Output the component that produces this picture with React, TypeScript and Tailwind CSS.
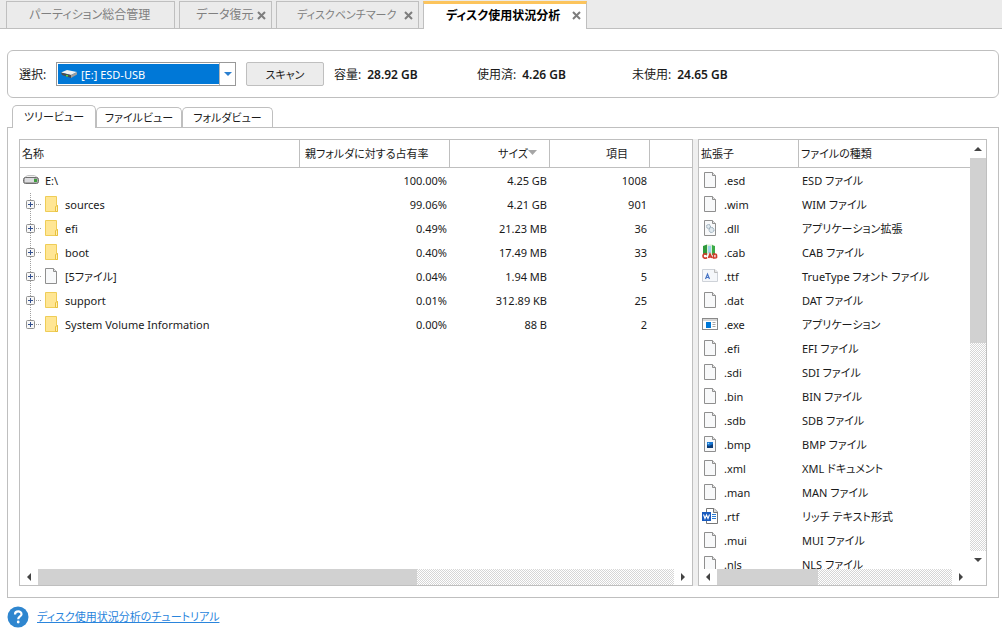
import { useState } from 'react';
import type { ReactNode } from 'react';

interface TreeRow {
  name: string;
  icon: 'drive' | 'folder' | 'file';
  percent: string;
  size: string;
  items: string;
}

interface FileType {
  ext: string;
  type: string;
  icon?: 'dll' | 'cab' | 'ttf' | 'exe' | 'bmp' | 'rtf';
}

const tabs = [
  { title: 'パーティション総合管理', box: 'w-[169px] mr-1 pl-[22px] text-[12px]', closable: false },
  { title: 'データ復元', box: 'w-[93px] mr-1 pl-4 text-[12px]', closable: true },
  { title: 'ディスクベンチマーク', box: 'w-[143px] mr-1 pl-5 text-[11px]', closable: true },
  { title: 'ディスク使用状況分析', box: 'w-[164px] pl-[22px] text-[12px]', closable: true },
];

const views = [
  { title: 'ツリービュー', width: 'w-[84px]' },
  { title: 'ファイルビュー', width: 'w-[86px]' },
  { title: 'フォルダビュー', width: 'w-[91px]' },
];

const treeRows: TreeRow[] = [
  { name: 'E:\\', icon: 'drive', percent: '100.00%', size: '4.25 GB', items: '1008' },
  { name: 'sources', icon: 'folder', percent: '99.06%', size: '4.21 GB', items: '901' },
  { name: 'efi', icon: 'folder', percent: '0.49%', size: '21.23 MB', items: '36' },
  { name: 'boot', icon: 'folder', percent: '0.40%', size: '17.49 MB', items: '33' },
  { name: '[5ファイル]', icon: 'file', percent: '0.04%', size: '1.94 MB', items: '5' },
  { name: 'support', icon: 'folder', percent: '0.01%', size: '312.89 KB', items: '25' },
  { name: 'System Volume Information', icon: 'folder', percent: '0.00%', size: '88 B', items: '2' },
];

const fileTypes: FileType[] = [
  { ext: '.esd', type: 'ESD ファイル' },
  { ext: '.wim', type: 'WIM ファイル' },
  { ext: '.dll', type: 'アプリケーション拡張', icon: 'dll' },
  { ext: '.cab', type: 'CAB ファイル', icon: 'cab' },
  { ext: '.ttf', type: 'TrueType フォント ファイル', icon: 'ttf' },
  { ext: '.dat', type: 'DAT ファイル' },
  { ext: '.exe', type: 'アプリケーション', icon: 'exe' },
  { ext: '.efi', type: 'EFI ファイル' },
  { ext: '.sdi', type: 'SDI ファイル' },
  { ext: '.bin', type: 'BIN ファイル' },
  { ext: '.sdb', type: 'SDB ファイル' },
  { ext: '.bmp', type: 'BMP ファイル', icon: 'bmp' },
  { ext: '.xml', type: 'XML ドキュメント' },
  { ext: '.man', type: 'MAN ファイル' },
  { ext: '.rtf', type: 'リッチ テキスト形式', icon: 'rtf' },
  { ext: '.mui', type: 'MUI ファイル' },
  { ext: '.nls', type: 'NLS ファイル' },
];

function Icon({ children }: { children: ReactNode }) {
  return (
    <svg width="16" height="16" viewBox="0 0 16 16" className="shrink-0" aria-hidden="true">
      {children}
    </svg>
  );
}

function Page() {
  return (
    <>
      <path d="M2.5 .5h8l3 3v12h-11z" fill="#f8f9fa" stroke="#8f8f8f" />
      <path d="M10.5 .5v3h3" fill="#e4e4e4" stroke="#8f8f8f" />
    </>
  );
}

function FolderIcon() {
  return (
    <Icon>
      <path d="M.5 .5h11v9h1v6h-12z" fill="#ffe694" stroke="#efcd57" />
      <path d="M10.5 15.5v-5l2-1v6z" fill="#fff0b5" stroke="#e9c13d" />
    </Icon>
  );
}

function DriveIcon() {
  return (
    <Icon>
      <path d="M3 4.5l1.500-1h7l1.500 1 2 1.500H1z" fill="#f1f1f1" stroke="#c4c4c4" />
      <rect x=".5" y="5.500" width="15" height="6" rx="2" fill="#a9a9a9" stroke="#6f6f6f" />
      <rect x="2" y="6" width="9" height="4" fill="#dcdcdf" />
      <rect x="11" y="7" width="3" height="3" fill="#3f9e3f" />
    </Icon>
  );
}

function TypeIcon({ icon }: { icon?: FileType['icon'] }) {
  switch (icon) {
    case 'dll':
      return (
        <Icon>
          <Page />
          <circle cx="6.500" cy="6.500" r="2" fill="#dfe8ee" stroke="#8298a8" strokeDasharray="1 .5" />
          <circle cx="9.500" cy="10" r="2.500" fill="#dfe8ee" stroke="#8298a8" strokeDasharray="1 .5" />
        </Icon>
      );
    case 'cab':
      return (
        <Icon>
          <path d="M1 2l4-1.500v11L1 10z" fill="#2f9a3c" />
          <path d="M5 .5h6v10H5z" fill="#d9f0d5" />
          <path d="M10 1l3 1v9h-3z" fill="#3bab47" />
          <path d="M6 2h3v7H6z" fill="#9bd3ea" />
          <path d="M5 10.500c-2-1.500-4-.5-4 1.500s2 3 4 1.500M6.500 14l1.500-4 2 4M7 13h2.500M11.500 10v4h1.500c2.500 0 2-2 .5-2 1.500 0 1.500-2-.5-2z" fill="none" stroke="#d03b2b" strokeWidth="1.600" />
        </Icon>
      );
    case 'ttf':
      return (
        <Icon>
          <path d="M.5 1.500h12.500l2.500 2.500v9.500H.5z" fill="#f5f7fa" stroke="#ced2d8" />
          <path d="M12.500 1.500v3h3" fill="#e5e5e5" stroke="#bbb" />
          <path d="M3.500 11l2-5 2 5M4.500 9.500h2.500" fill="none" stroke="#4573c4" strokeWidth="1.200" />
        </Icon>
      );
    case 'exe':
      return (
        <Icon>
          <rect x=".5" y="2.500" width="15" height="11" fill="#fff" stroke="#8a8a8a" />
          <path d="M1 3h14v2H1z" fill="#d6d6d6" />
          <path d="M4 6h5v6H4z" fill="#0078d7" />
          <path d="M10.500 6.500h3M10.500 8.500h3M10.500 10.500h3" stroke="#a6a6a6" />
        </Icon>
      );
    case 'bmp':
      return (
        <Icon>
          <Page />
          <path d="M5 6h6v6H5z" fill="#1876d2" />
          <path d="M5 12V9l2 1 4-2v4z" fill="#0c3c77" />
          <circle cx="6.500" cy="7.500" r=".8" fill="#9bdcff" />
        </Icon>
      );
    case 'rtf':
      return (
        <Icon>
          <path d="M4.500 .5h7.500l3.500 3.500v11.500h-11z" fill="#fff" stroke="#777" />
          <path d="M11.500 .5v4h4" fill="#ddd" stroke="#777" />
          <path d="M10 6.500h4M10 8.500h4M10 10.500h4" stroke="#2b7cd3" />
          <path d="M0 4h9v9H0z" fill="#185abd" />
          <path d="M1.500 6.500l1.500 4 1.500-3.500 1.500 3.500 1.500-4" fill="none" stroke="#fff" strokeWidth="1.100" />
        </Icon>
      );
    default:
      return (
        <Icon>
          <Page />
        </Icon>
      );
  }
}

// Dotted guide line with the expand box of one tree node
function Branch({ last }: { last: boolean }) {
  return (
    <svg width="25" height="24" viewBox="0 0 25 24" className="shrink-0" aria-hidden="true">
      <path d={last ? 'M10.500 1v11' : 'M10.500 1v23'} stroke="#a0a0a0" strokeDasharray="1 1" />
      <path d="M16 12.500h5" stroke="#a0a0a0" strokeDasharray="1 1" />
      <rect x="6.500" y="8.500" width="8" height="8" rx="1" fill="#f7f7f7" stroke="#919191" />
      <path d="M8 12.500h5M10.500 10v5" stroke="#33508f" />
    </svg>
  );
}

function CloseButton({ title }: { title: string }) {
  return (
    <button type="button" aria-label={`${title}を閉じる`} className="ml-auto mr-[5px] size-[9px]">
      <svg width="9" height="9" viewBox="0 0 9 9">
        <path d="M1 1l7 7M8 1l-7 7" stroke="#7d7d7d" strokeWidth="2" />
      </svg>
    </button>
  );
}

const arrowPaths = {
  left: 'M7 1v8l-4-4z',
  right: 'M3 1v8l4-4z',
  up: 'M1 7h8l-4-4z',
  down: 'M1 3h8l-4 4z',
};

function ArrowButton({ dir, label }: { dir: keyof typeof arrowPaths; label: string }) {
  return (
    <button type="button" aria-label={label} className="flex size-[18px] shrink-0 items-center justify-center">
      <svg width="10" height="10" viewBox="0 0 10 10">
        <path d={arrowPaths[dir]} fill="#444" />
      </svg>
    </button>
  );
}

const track = 'bg-[conic-gradient(#d6d6d6_25%,#fff_0_50%,#d6d6d6_0_75%,#fff_0)] bg-[length:2px_2px]';

function HorizontalBar({ thumb }: { thumb: string }) {
  return (
    <div className="flex h-4 shrink-0 items-center">
      <ArrowButton dir="left" label="左へスクロール" />
      <div className={`h-full flex-1 ${track}`}>
        <div className={`h-full bg-[#d1d1d1] ${thumb}`} />
      </div>
      <ArrowButton dir="right" label="右へスクロール" />
    </div>
  );
}

function Capacity({ label, value, width }: { label: string; value: string; width: string }) {
  return (
    <p className={`flex gap-[6px] ${width}`}>
      <span>{label}</span>
      <b className="font-semibold">{value}</b>
    </p>
  );
}

export default function App() {
  const [activeTab, setActiveTab] = useState(3);
  const [activeView, setActiveView] = useState(0);

  return (
    <div className="flex h-screen flex-col overflow-hidden bg-white font-['Noto_Sans','Noto_Sans_CJK_JP',sans-serif] text-[11px] leading-4 text-[#1a1a1a] [font-feature-settings:'palt']">
      <nav className="flex h-[29px] shrink-0 border-b border-[#bfbfbf] bg-[#ebebeb] pt-px pl-[6px]">
        {tabs.map((tab, i) => (
          <div
            key={tab.title}
            className={`flex shrink-0 items-center border-x border-t border-[#bfbfbf] ${tab.box} ${
              i === activeTab ? '-mb-px border-t-[3px] border-t-[#fcc45c] bg-white pb-[2px] font-bold text-black' : 'text-[#808080]'
            }`}
          >
            <button type="button" className="whitespace-nowrap" onClick={() => setActiveTab(i)}>
              {tab.title}
            </button>
            {tab.closable && <CloseButton title={tab.title} />}
          </div>
        ))}
      </nav>

      <main className="flex min-h-0 flex-1 flex-col pt-[21px] pr-[3px] pl-[7px]">
        <section className="flex h-12 shrink-0 items-center rounded-md border border-[#bfbfbf] pl-[11px] text-[12px]">
          <label htmlFor="drive" className="w-[37px] pt-[2px] whitespace-nowrap">選択:</label>
          <div className="relative h-6 w-[180px] border border-[#999] p-px">
            <select
              id="drive"
              className="block h-5 w-[162px] appearance-none bg-[#0078d7] pt-px pl-[23px] text-[11px] text-white outline-none"
            >
              <option>[E:] ESD-USB</option>
            </select>
            <svg width="16" height="10" viewBox="0 0 16 10" className="pointer-events-none absolute top-[6px] left-1">
              <path d="M0 3.500L6 1l10 2-6 3z" fill="#f1f1f1" />
              <path d="M0 3.500L10 6v3L1 6z" fill="#4d4d4d" />
              <path d="M10 6l6-3v2.500L10 9z" fill="#9d9d9d" />
              <path d="M5 6h2v1.500H5z" fill="#4fd14f" />
            </svg>
            <span className="pointer-events-none absolute inset-y-0 right-0 flex w-4 items-center justify-center border-l border-[#b5b5b5] bg-white">
              <svg width="8" height="4" viewBox="0 0 8 4">
                <path d="M0 0h8l-4 4z" fill="#2a7fd0" />
              </svg>
            </span>
          </div>
          <button type="button" className="mr-[10px] ml-[10px] h-6 w-[78px] rounded-xs border border-[#bfbfbf] bg-[#ececec] pt-[2px] text-[11px]">
            スキャン
          </button>
          <div className="flex pt-[2px]">
            <Capacity label="容量:" value="28.92 GB" width="w-[143px]" />
            <Capacity label="使用済:" value="4.26 GB" width="w-[155px]" />
            <Capacity label="未使用:" value="24.65 GB" width="w-[143px]" />
          </div>
        </section>

        <div className="mt-[7px] flex h-[22px] shrink-0 items-end pl-[5px]">
          {views.map((view, i) => (
            <button
              key={view.title}
              type="button"
              onClick={() => setActiveView(i)}
              className={`rounded-t-[5px] border border-b-0 border-[#bfbfbf] bg-white whitespace-nowrap ${view.width} ${
                i === activeView ? 'relative -mb-px h-[23px]' : 'h-5'
              }`}
            >
              {view.title}
            </button>
          ))}
        </div>

        <section className="flex min-h-0 flex-1 border border-[#bfbfbf] p-[11px]">
          <div className="flex min-w-0 flex-1 flex-col border border-[#bfbfbf]">
            <div className="min-h-0 flex-1 overflow-hidden">
              <table className="w-full table-fixed border-separate border-spacing-0">
                <colgroup>
                  <col className="w-[280px]" />
                  <col className="w-[150px]" />
                  <col className="w-[100px]" />
                  <col className="w-[100px]" />
                  <col />
                </colgroup>
                <thead>
                  <tr className="h-7 *:border-b *:border-[#bfbfbf] *:p-0 *:font-normal *:not-last:border-r">
                    <th className="text-left"><span className="pl-[2px]">名称</span></th>
                    <th className="text-left"><span className="pl-[5px]">親フォルダに対する占有率</span></th>
                    <th>
                      <span className="flex justify-end pr-3">
                        サイズ
                        <svg width="9" height="5" viewBox="0 0 9 5" className="mt-1">
                          <path d="M0 0h9l-4.500 5z" fill="#a6a6a6" />
                        </svg>
                      </span>
                    </th>
                    <th className="text-right"><span className="pr-[21px]">項目</span></th>
                    <th />
                  </tr>
                </thead>
                <tbody>
                  {treeRows.map((row, i) => (
                    <tr key={row.name} className="h-6">
                      <td className="p-0">
                        <div className="flex h-6 items-center gap-1">
                          {row.icon === 'drive' ? (
                            <span className="flex gap-[6px] pl-[3px]">
                              <DriveIcon />
                              <span className="pt-px">{row.name}</span>
                            </span>
                          ) : (
                            <>
                              <span className="flex items-center">
                                <Branch last={i === treeRows.length - 1} />
                                {row.icon === 'folder' ? <FolderIcon /> : <span className="-ml-[2px] flex pr-[2px]"><TypeIcon /></span>}
                              </span>
                              <span className="pt-[2px]">{row.name}</span>
                            </>
                          )}
                        </div>
                      </td>
                      <td className="pt-[2px] pr-[3px] text-right">{row.percent}</td>
                      <td className="pt-[2px] pr-[3px] text-right">{row.size}</td>
                      <td className="pt-[2px] pr-[3px] text-right">{row.items}</td>
                      <td />
                    </tr>
                  ))}
                </tbody>
              </table>
            </div>
            <HorizontalBar thumb="w-[59.6%]" />
          </div>

          <div className="w-[5px] shrink-0 bg-[#efefef]" />

          <div className="flex w-[289px] shrink-0 flex-col border border-[#bfbfbf]">
            <div className="flex min-h-0 flex-1">
              <div className="min-w-0 flex-1 overflow-hidden">
                <table className="w-full table-fixed border-separate border-spacing-0">
                  <colgroup>
                    <col className="w-[100px]" />
                    <col />
                  </colgroup>
                  <thead>
                    <tr className="h-7 text-left *:border-b *:border-[#bfbfbf] *:p-0 *:font-normal">
                      <th className="border-r"><span className="pl-[2px]">拡張子</span></th>
                      <th><span className="pl-[2px]">ファイルの種類</span></th>
                    </tr>
                  </thead>
                  <tbody>
                    {fileTypes.map((file) => (
                      <tr key={file.ext} className="h-6">
                        <td className="p-0">
                          <div className="flex h-6 items-center gap-[6px] pl-[3px]">
                            <TypeIcon icon={file.icon} />
                            <span className="pt-[2px]">{file.ext}</span>
                          </div>
                        </td>
                        <td className="pt-[2px] pl-[3px]">{file.type}</td>
                      </tr>
                    ))}
                  </tbody>
                </table>
              </div>
              <div className="flex w-4 shrink-0 flex-col items-center">
                <ArrowButton dir="up" label="上へスクロール" />
                <div className={`w-full flex-1 ${track}`}>
                  <div className="h-[47%] bg-[#d1d1d1]" />
                </div>
                <ArrowButton dir="down" label="下へスクロール" />
              </div>
            </div>
            <div className="pr-4">
              <HorizontalBar thumb="w-[43%]" />
            </div>
          </div>
        </section>

        <footer className="flex h-[33px] shrink-0 items-center gap-2 pt-1">
          <svg width="22" height="22" viewBox="0 0 22 22" aria-hidden="true">
            <circle cx="11" cy="11" r="10.500" fill="#2f86cf" />
            <path d="M8 8.500c0-4 6.500-4 6.500-.3 0 2.300-3.300 2.300-3.300 5" fill="none" stroke="#fff" strokeWidth="2.200" />
            <circle cx="11.200" cy="16" r="1.400" fill="#fff" />
          </svg>
          <a href="#tutorial" className="text-[#2a85dc] underline">
            ディスク使用状況分析のチュートリアル
          </a>
        </footer>
      </main>
    </div>
  );
}
